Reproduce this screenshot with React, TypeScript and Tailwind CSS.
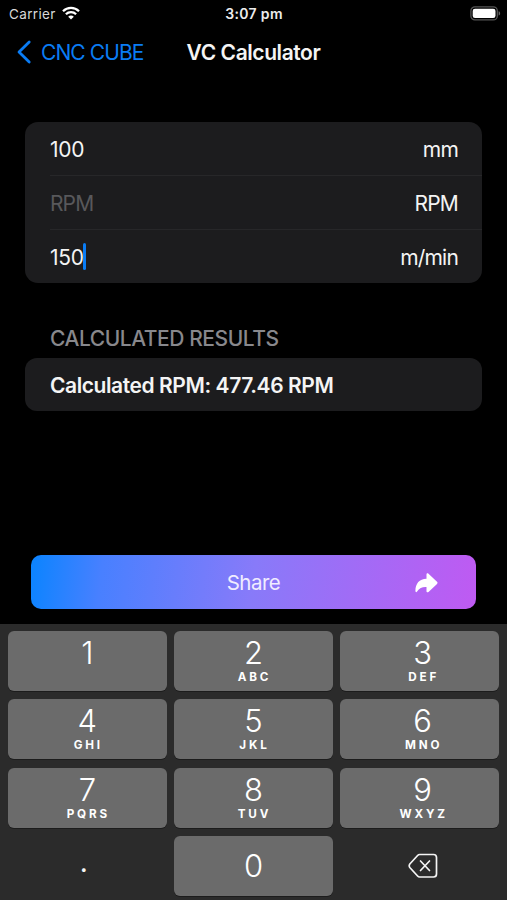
import React from 'react';

const fields = [
  { value: '100', placeholder: 'Diameter', unit: 'mm', active: false },
  { value: '', placeholder: 'RPM', unit: 'RPM', active: false },
  { value: '150', placeholder: 'VC', unit: 'm/min', active: true },
];

const keys = [
  { digit: '1', letters: '' },
  { digit: '2', letters: 'ABC' },
  { digit: '3', letters: 'DEF' },
  { digit: '4', letters: 'GHI' },
  { digit: '5', letters: 'JKL' },
  { digit: '6', letters: 'MNO' },
  { digit: '7', letters: 'PQRS' },
  { digit: '8', letters: 'TUV' },
  { digit: '9', letters: 'WXYZ' },
];

const StatusBar: React.FC = () => (
  <div className="grid h-7 grid-cols-3 items-center pl-[9px] pr-[6px] text-[13.5px] leading-7">
    <div className="flex items-center gap-[6px] text-[#d8d8d8]">
      <span className="tracking-[0.35px]">Carrier</span>
      <svg className="-mt-[2px]" width="18" height="14" viewBox="0 0 18 14" fill="none" stroke="#fff" strokeWidth="2.3">
        <path d="M1 5.2C5.5.8 12.500.8 17 5.2" />
        <path d="M3.900 8.300C6.700 5.500 11.300 5.500 14.100 8.300" />
        <path d="M9 13.500L6.200 10.700C7.800 9.200 10.200 9.200 11.800 10.700Z" fill="#fff" stroke="none" />
      </svg>
    </div>
    <span className="pr-[2px] text-center text-[14px] font-semibold tracking-[0.35px] text-[#ececec]">3:07 pm</span>
    <svg className="-mt-[2px] justify-self-end" width="31" height="15" viewBox="0 0 31 15">
      <rect x="0.900" y="0.900" width="26.400" height="13" rx="4" fill="none" stroke="#555" strokeWidth="1.300" />
      <rect x="2.700" y="2.700" width="22.800" height="9.400" rx="2.300" fill="#fff" />
      <path d="M28.600 5.200C30.600 5.800 30.600 9 28.600 9.600Z" fill="#666" />
    </svg>
  </div>
);

const NavBar: React.FC = () => (
  <header className="grid h-12 grid-cols-[1fr_auto_1fr] items-center px-4 text-[21px]">
    <button className="flex items-center gap-[9px] text-[#0a7cf4]">
      <svg width="16" height="24" viewBox="0 0 16 24" fill="none" stroke="currentColor" strokeWidth="2.800" strokeLinecap="round" strokeLinejoin="round">
        <path d="M13.200 2L3 12l10.200 10" />
      </svg>
      <span className="pt-[2px] tracking-[-0.9px]">CNC CUBE</span>
    </button>
    <h1 className="pt-[2px] font-[580] tracking-[-0.42px]">VC Calculator</h1>
  </header>
);

const App: React.FC = () => {
  return (
    <div className="flex h-[900px] w-[507px] flex-col overflow-hidden bg-black font-['Inter',sans-serif] text-[#f4f4f4]">
      <StatusBar />
      <NavBar />
      <main className="flex flex-1 flex-col px-[25px] pt-[46px] text-[21px] tracking-[-0.5px]">
        <div className="rounded-[13px] bg-[#1c1c1e] pl-[25px]">
          {fields.map((f, i) => (
            <label
              key={f.unit}
              className={`flex items-center justify-between pt-[2px] pr-6 ${i < 2 ? 'h-[54px] border-b border-[#272729]' : 'h-[53px]'}`}
            >
              <span className="flex items-center">
                {f.value ? <span className="tracking-[-0.3px]">{f.value}</span> : <span className="tracking-[-0.9px] text-[#58585b]">{f.placeholder}</span>}
                {f.active && <span className="-mt-[2px] -ml-[1px] h-[27px] w-[3px] rounded-full bg-[#0a7cf4]" />}
              </span>
              <span className="tracking-[-0.8px]">{f.unit}</span>
            </label>
          ))}
        </div>
        <h2 className="mt-[42px] pl-[25px] leading-[27px] font-medium tracking-[-0.45px] text-[#88888c]">CALCULATED RESULTS</h2>
        <div className="mt-[6px] flex h-[53px] items-center rounded-[12px] bg-[#1c1c1e] pt-[2px] pl-[25px] font-[580] tracking-[-0.42px]">
          Calculated RPM: 477.46 RPM
        </div>
        <button className="mx-[6px] mt-auto mb-[15px] grid h-[54px] grid-cols-[1fr_auto_1fr] items-center rounded-[10px] bg-linear-[97deg,#0a84ff_0%,#4880ff_16%,#887af9_50%,#bf5af2_100%] text-[#f0ecff]">
          <span />
          <span className="pt-[2px] text-[20.5px]">Share</span>
          <svg className="mt-px mr-[38px] justify-self-end" width="23" height="20" viewBox="0 0 23 20" fill="#fff">
            <path d="M11.500 1.400C11.500.3 12.600-.1 13.500.700L22 8.700C22.700 9.400 22.700 10.300 22 11L13.500 18.900C12.600 19.700 11.500 19.300 11.500 18.200V14C7.600 13.700 4.300 15 2.100 18.500C1.400 19.500.4 19.300.4 18C.4 10.500 4.400 5.800 11.500 5.700Z" />
          </svg>
        </button>
      </main>
      <div className="grid h-[276px] grid-cols-3 grid-rows-[repeat(4,60px)] gap-x-[7.500px] gap-y-[8.400px] bg-[#2b2b2b] px-[8px] pt-[7px]">
        {keys.map((k, i) => (
          <button
            key={k.digit}
            className={`flex flex-col items-center rounded-[6px] bg-[#6b6b6b] pt-[5px] text-white shadow-[0_1px_0_#1c1c1c] ${i % 3 === 2 ? 'pl-[6px]' : ''}`}
          >
            <span className="text-[31px] leading-[34px] font-[340]">{k.digit}</span>
            <span className="pl-[2px] text-[11.700px] leading-[15px] font-bold tracking-[2.800px]">{k.letters}</span>
          </button>
        ))}
        <span className="flex items-center justify-center pr-[7px]">
          <span className="mt-[7px] -translate-y-[8px] text-[28px] leading-[34px]">.</span>
        </span>
        <button className="flex items-center justify-center rounded-[6px] bg-[#6b6b6b] text-[31px] font-[340] text-white shadow-[0_1px_0_#1c1c1c]">0</button>
        <button className="flex items-center justify-center pb-px pl-[7px]">
          <svg width="30" height="26" viewBox="0 0 30 26" fill="none" stroke="#f4f4f4" strokeWidth="1.700" strokeLinecap="round" strokeLinejoin="round">
            <path d="M11.700 1.500H25.500Q28.500 1.500 28.500 4.500V21Q28.500 24 25.500 24H11.700Q10.500 24 9.600 23L1.800 14.500Q.6 12.800 1.800 11L9.600 2.500Q10.500 1.500 11.700 1.500Z" />
            <path d="M12.500 8L21.500 17.500M21.500 8L12.500 17.500" />
          </svg>
        </button>
      </div>
    </div>
  );
};

export default App;
